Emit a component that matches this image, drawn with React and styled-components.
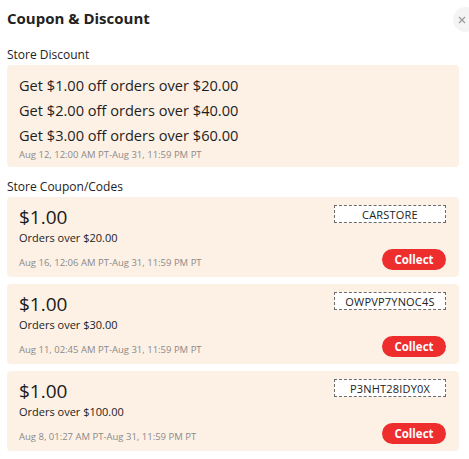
import React from "react";
import { styled, createGlobalStyle } from "styled-components";

const GlobalStyle = createGlobalStyle`
  body {
    margin: 0;
    background: #ffffff;
    font-family: "Open Sans", "Liberation Sans", sans-serif;
    color: #222222;
  }
`;

const Wrapper = styled.div`
  width: 469px;
  height: 459px;
  overflow: hidden;
  box-sizing: border-box;
  padding: 0 10px 0 7px;
  position: relative;
`;

const Header = styled.div`
  height: 36px;
  display: flex;
  align-items: center;
`;

const Title = styled.h1`
  margin: 0;
  font-size: 15px;
  font-weight: 700;
  color: #222222;
`;

const CloseButton = styled.div`
  position: absolute;
  top: 7px;
  right: -9px;
  width: 25px;
  height: 25px;
  border-radius: 50%;
  background: #f4f4f4;
  display: flex;
  align-items: center;
  justify-content: flex-start;
  padding-left: 5px;
  box-sizing: border-box;
`;

const SectionTitle = styled.div`
  font-size: 12px;
  color: #222222;
  height: 22px;
  display: flex;
  align-items: center;
  margin-top: ${(p) => p.top || 7}px;
`;

const Panel = styled.div`
  background: #fdf1e5;
  border-radius: 4px;
  padding: 8px 12px 5px;
`;

const DiscountLine = styled.div`
  font-size: 14.6px;
  line-height: 25px;
  color: #1e1e1e;
`;

const DateText = styled.div`
  font-size: 9.5px;
  color: #8a8a8a;
  line-height: 14px;
`;

const CouponList = styled.div`
  display: flex;
  flex-direction: column;
  gap: 7px;
`;

const CouponCard = styled.div`
  background: #fdf1e5;
  border-radius: 4px;
  height: 80px;
  box-sizing: border-box;
  padding: 7px 13px 7px 12px;
  display: flex;
  justify-content: space-between;
`;

const CouponLeft = styled.div`
  display: flex;
  flex-direction: column;
`;

const Amount = styled.div`
  font-size: 19px;
  line-height: 26px;
  color: #1a1a1a;
`;

const Orders = styled.div`
  font-size: 11px;
  line-height: 15px;
  color: #222222;
  flex: 1;
`;

const CouponRight = styled.div`
  display: flex;
  flex-direction: column;
  align-items: flex-end;
  justify-content: space-between;
  padding-top: 1px;
`;

const Code = styled.div`
  width: 112px;
  height: 18px;
  box-sizing: border-box;
  border: 1px dashed #6b6b6b;
  background: #ffffff;
  font-size: 11px;
  display: flex;
  align-items: center;
  justify-content: center;
  color: #222222;
  letter-spacing: 0.2px;
`;

const CollectButton = styled.button`
  width: 64px;
  height: 21px;
  border: none;
  border-radius: 11px;
  background: #ee2d2d;
  color: #ffffff;
  font-family: "Open Sans", "Liberation Sans", sans-serif;
  font-size: 11.5px;
  font-weight: 700;
  padding: 0;
`;

const discounts = [
  "Get $1.00 off orders over $20.00",
  "Get $2.00 off orders over $40.00",
  "Get $3.00 off orders over $60.00",
];

const coupons = [
  { code: "CARSTORE", min: "$20.00", date: "Aug 16, 12:06 AM PT-Aug 31, 11:59 PM PT" },
  { code: "OWPVP7YNOC4S", min: "$30.00", date: "Aug 11, 02:45 AM PT-Aug 31, 11:59 PM PT" },
  { code: "P3NHT28IDY0X", min: "$100.00", date: "Aug 8, 01:27 AM PT-Aug 31, 11:59 PM PT" },
];

const App = () => {
  return (
    <Wrapper>
      <GlobalStyle />
      <Header>
        <Title>Coupon &amp; Discount</Title>
      </Header>
      <CloseButton>
        <svg width="8" height="8" viewBox="0 0 8 8">
          <path d="M1 1 L7 7 M7 1 L1 7" stroke="#9a9a9a" strokeWidth="1.2" />
        </svg>
      </CloseButton>

      <SectionTitle top={7}>Store Discount</SectionTitle>
      <Panel>
        {discounts.map((d) => (
          <DiscountLine key={d}>{d}</DiscountLine>
        ))}
        <DateText>Aug 12, 12:00 AM PT-Aug 31, 11:59 PM PT</DateText>
      </Panel>

      <SectionTitle top={8}>Store Coupon/Codes</SectionTitle>
      <CouponList>
        {coupons.map((c) => (
          <CouponCard key={c.code}>
            <CouponLeft>
              <Amount>$1.00</Amount>
              <Orders>Orders over {c.min}</Orders>
              <DateText>{c.date}</DateText>
            </CouponLeft>
            <CouponRight>
              <Code>{c.code}</Code>
              <CollectButton>Collect</CollectButton>
            </CouponRight>
          </CouponCard>
        ))}
      </CouponList>
    </Wrapper>
  );
};

export default App;
